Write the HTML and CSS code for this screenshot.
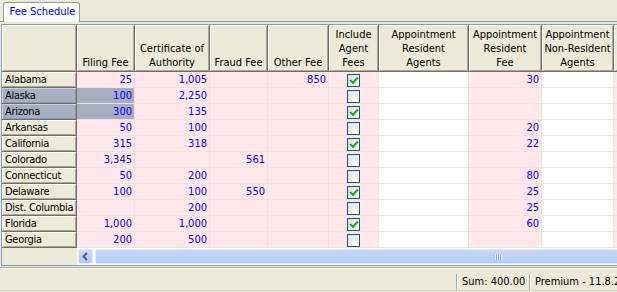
FILE: index.html
```html
<!DOCTYPE html>
<html>
<head>
<meta charset="utf-8">
<link rel="stylesheet" href="styles.css">
</head>
<body>
<div class="app">
  <div class="tabstrip">
    <div class="tab">Fee Schedule</div>
  </div>
  <div class="grid">
    <div class="row head">
      <div class="hc"></div>
      <div class="hc">Filing Fee</div>
      <div class="hc">Certificate of<br>Authority</div>
      <div class="hc">Fraud Fee</div>
      <div class="hc">Other Fee</div>
      <div class="hc">Include<br>Agent<br>Fees</div>
      <div class="hc">Appointment<br>Resident<br>Agents</div>
      <div class="hc">Appointment<br>Resident<br>Fee</div>
      <div class="hc">Appointment<br>Non-Resident<br>Agents</div>
      <div class="hc"></div>
    </div>

    <div class="row">
      <div class="rh">Alabama</div>
      <div class="c p">25</div><div class="c p">1,005</div><div class="c p"></div><div class="c p">850</div>
      <div class="c p chk"><span class="cb on"></span></div>
      <div class="c w"></div><div class="c p">30</div><div class="c w"></div><div class="c p"></div>
    </div>
    <div class="row">
      <div class="rh sel">Alaska</div>
      <div class="c s">100</div><div class="c p">2,250</div><div class="c p"></div><div class="c p"></div>
      <div class="c p chk"><span class="cb"></span></div>
      <div class="c w"></div><div class="c p"></div><div class="c w"></div><div class="c p"></div>
    </div>
    <div class="row">
      <div class="rh sel">Arizona</div>
      <div class="c s">300</div><div class="c p">135</div><div class="c p"></div><div class="c p"></div>
      <div class="c p chk"><span class="cb on"></span></div>
      <div class="c w"></div><div class="c p"></div><div class="c w"></div><div class="c p"></div>
    </div>
    <div class="row">
      <div class="rh">Arkansas</div>
      <div class="c p">50</div><div class="c p">100</div><div class="c p"></div><div class="c p"></div>
      <div class="c p chk"><span class="cb"></span></div>
      <div class="c w"></div><div class="c p">20</div><div class="c w"></div><div class="c p"></div>
    </div>
    <div class="row">
      <div class="rh">California</div>
      <div class="c p">315</div><div class="c p">318</div><div class="c p"></div><div class="c p"></div>
      <div class="c p chk"><span class="cb on"></span></div>
      <div class="c w"></div><div class="c p">22</div><div class="c w"></div><div class="c p"></div>
    </div>
    <div class="row">
      <div class="rh">Colorado</div>
      <div class="c p">3,345</div><div class="c p"></div><div class="c p">561</div><div class="c p"></div>
      <div class="c p chk"><span class="cb"></span></div>
      <div class="c w"></div><div class="c p"></div><div class="c w"></div><div class="c p"></div>
    </div>
    <div class="row">
      <div class="rh">Connecticut</div>
      <div class="c p">50</div><div class="c p">200</div><div class="c p"></div><div class="c p"></div>
      <div class="c p chk"><span class="cb"></span></div>
      <div class="c w"></div><div class="c p">80</div><div class="c w"></div><div class="c p"></div>
    </div>
    <div class="row">
      <div class="rh">Delaware</div>
      <div class="c p">100</div><div class="c p">100</div><div class="c p">550</div><div class="c p"></div>
      <div class="c p chk"><span class="cb on"></span></div>
      <div class="c w"></div><div class="c p">25</div><div class="c w"></div><div class="c p"></div>
    </div>
    <div class="row">
      <div class="rh">Dist. Columbia</div>
      <div class="c p"></div><div class="c p">200</div><div class="c p"></div><div class="c p"></div>
      <div class="c p chk"><span class="cb"></span></div>
      <div class="c w"></div><div class="c p">25</div><div class="c w"></div><div class="c p"></div>
    </div>
    <div class="row">
      <div class="rh">Florida</div>
      <div class="c p">1,000</div><div class="c p">1,000</div><div class="c p"></div><div class="c p"></div>
      <div class="c p chk"><span class="cb on"></span></div>
      <div class="c w"></div><div class="c p">60</div><div class="c w"></div><div class="c p"></div>
    </div>
    <div class="row">
      <div class="rh">Georgia</div>
      <div class="c p">200</div><div class="c p">500</div><div class="c p"></div><div class="c p"></div>
      <div class="c p chk"><span class="cb"></span></div>
      <div class="c w"></div><div class="c p"></div><div class="c w"></div><div class="c p"></div>
    </div>

    <div class="hscroll">
      <div class="corner"></div>
      <div class="track">
        <div class="sbtn">
          <svg width="9" height="9" viewBox="0 0 9 9"><path d="M6 1 L2.5 4.5 L6 8" fill="none" stroke="#4d6185" stroke-width="2"/></svg>
        </div>
        <div class="thumb"><span class="grip"></span></div>
      </div>
    </div>
  </div>
  <div class="status">
    <div class="spacer"></div>
    <div class="panel sum">Sum: 400.00</div>
    <div class="panel prem">Premium - 11.8.2</div>
  </div>
</div>
</body>
</html>
```
FILE: styles.css
```css
html, body {
  margin: 0;
  padding: 0;
  background: #ece9d8;
  overflow: hidden;
}
body {
  width: 617px;
  height: 292px;
  font-family: "DejaVu Sans Condensed", "Liberation Sans", sans-serif;
  font-size: 11px;
  color: #000;
}
.app {
  width: 617px;
  height: 292px;
  display: flex;
  flex-direction: column;
  overflow: hidden;
}
.tabstrip {
  height: 19px;
  padding: 2px 0 0 3px;
  border-bottom: 1px solid #919b9c;
  display: flex;
  box-sizing: content-box;
  background: #ece9d8;
}
.tab {
  width: 77px;
  box-sizing: border-box;
  border: 1px solid #919b9c;
  border-bottom: none;
  border-radius: 3px 3px 0 0;
  background: linear-gradient(#ffffff, #f7f7f4);
  color: #0000ff;
  text-align: center;
  line-height: 17px;
  margin-bottom: -1px;
  height: 20px;
  padding-left: 2px;
}
.grid {
  margin-top: 2px;
  margin-left: 1px;
  border-top: 1px solid #7f9db9;
  border-left: 1px solid #7f9db9;
  border-bottom: 1px solid #7f9db9;
  background: #ece9d8;
  overflow: hidden;
}
.row {
  display: grid;
  grid-template-columns: 75px 58px 75px 58px 61px 50px 90px 73px 72px 40px;
  height: 16px;
}
.row.head {
  height: 47px;
}
.hc {
  box-sizing: border-box;
  background: #ece9d8;
  border-right: 1px solid #716f64;
  border-bottom: 1px solid #716f64;
  box-shadow: inset 1px 1px 0 #ffffff, inset -1px -1px 0 #aca899;
  display: flex;
  align-items: flex-end;
  justify-content: center;
  text-align: center;
  line-height: 14px;
  padding: 0 1px 1px;
  white-space: nowrap;
}
.rh {
  box-sizing: border-box;
  background: #ece9d8;
  border-right: 1px solid #716f64;
  border-bottom: 1px solid #716f64;
  box-shadow: inset 1px 1px 0 #ffffff, inset -1px -1px 0 #aca899;
  padding-left: 3px;
  letter-spacing: -0.3px;
  line-height: 15px;
  white-space: nowrap;
  overflow: hidden;
}
.rh.sel {
  background: #a6aec2;
  box-shadow: inset 1px 1px 0 #c9cedb, inset -1px -1px 0 #8d94a6;
}
.c {
  box-sizing: border-box;
  border-right: 1px solid #ece6d6;
  border-bottom: 1px solid #ece6d6;
  color: #0000ff;
  text-align: right;
  padding-right: 2px;
  line-height: 15px;
  white-space: nowrap;
}
.c.p { background: #ffe7ec; }
.c.w { background: #ffffff; }
.c.s { background: #a6aec2; }
.chk {
  display: flex;
  align-items: center;
  justify-content: center;
  padding: 0;
}
.cb {
  width: 13px;
  height: 13px;
  box-sizing: border-box;
  border: 1px solid #1c5180;
  background: linear-gradient(135deg, #dcdcd5 0%, #f5f5f2 60%, #ffffff 100%);
  position: relative;
  margin-top: 1px;
}
.cb.on::after {
  content: "";
  position: absolute;
  left: 2px;
  top: 2px;
  width: 6px;
  height: 3px;
  border-left: 2px solid #21a121;
  border-bottom: 2px solid #21a121;
  transform: rotate(-48deg);
  transform-origin: center;
}
.hscroll {
  display: flex;
  height: 17px;
}
.corner {
  width: 75px;
  flex: none;
  background: #ece9d8;
}
.track {
  flex: 1;
  background: #fcfcfe;
  display: flex;
  align-items: center;
  padding-left: 1px;
  gap: 2px;
  overflow: hidden;
}
.sbtn {
  width: 15px;
  height: 15px;
  flex: none;
  box-sizing: border-box;
  border: 1px solid #e2e9fb;
  border-radius: 2px;
  background: linear-gradient(#c8d8fb, #b4c8f6);
  display: flex;
  align-items: center;
  justify-content: center;
}
.thumb {
  width: 806px;
  height: 15px;
  flex: none;
  box-sizing: border-box;
  border: 1px solid #e0e8fc;
  border-radius: 2px;
  background: linear-gradient(#c6d8fd, #b5cbf8);
  position: relative;
}
.grip {
  position: absolute;
  left: 399px;
  top: 4px;
  width: 7px;
  height: 6px;
  background: repeating-linear-gradient(90deg, #eef4fe 0 1px, #8caaea 1px 2px);
}
.status {
  flex: 1;
  display: flex;
  border-top: 1px solid #aca899;
  margin-top: 1px;
  box-shadow: inset 0 1px 0 #ffffff;
  border-bottom: 1px solid #d4d0c8;
  margin-bottom: 1px;
}
.spacer { width: 456px; flex: none; }
.panel {
  border-left: 1px solid #aca899;
  box-shadow: inset 1px 0 0 #ffffff;
  margin: 6px 0 0;
  padding: 0 0 0 5px;
  line-height: 15px;
  white-space: nowrap;
}
.sum { width: 67px; flex: none; }
.prem { flex: 1; overflow: hidden; }
```
